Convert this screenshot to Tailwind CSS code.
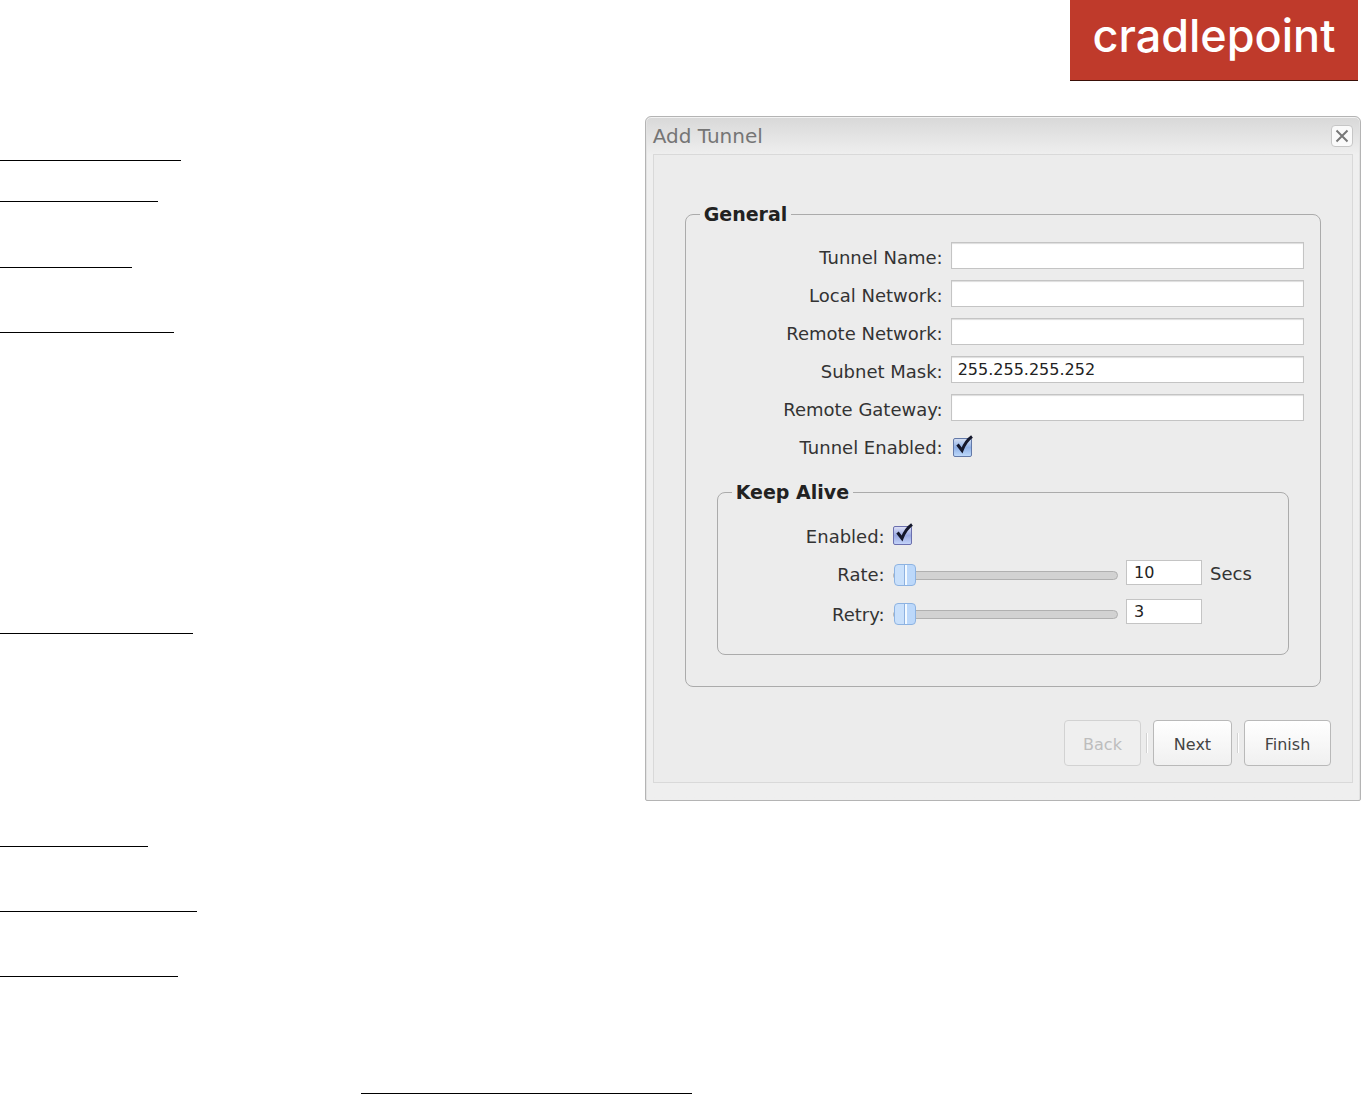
<!DOCTYPE html>
<html lang="en">
<head>
<meta charset="utf-8">
<meta name="viewport" content="width=device-width, initial-scale=1">
<title>Add Tunnel</title>
<script src="https://cdn.jsdelivr.net/npm/@tailwindcss/browser@4"></script>
</head>
<body class="bg-white font-['DejaVu_Sans',sans-serif] text-[#333]">
<header class="flex justify-end pr-1">
  <div class="flex h-[81px] w-72 items-start justify-center border-b border-[#3a0f08] bg-[#bf3a2b] pt-2 font-['Inter',sans-serif] text-[45px] leading-[56px] font-medium text-white">cradlepoint</div>
</header>

<main class="grid grid-cols-[9fr_10fr] items-start pt-[35px] pr-px">
  <!-- section rules -->
  <div class="pt-11">
    <hr class="w-[181px] border-black">
    <hr class="mt-10 w-[158px] border-black">
    <hr class="mt-[65px] w-[132px] border-black">
    <hr class="mt-16 w-[174px] border-black">
    <hr class="mt-[300px] w-[193px] border-black">
    <hr class="mt-[212px] w-[148px] border-black">
    <hr class="mt-16 w-[197px] border-black">
    <hr class="mt-16 w-[178px] border-black">
  </div>

  <form role="dialog" aria-labelledby="title" class="rounded-t-md rounded-b-xs border border-[#b4b4b4] bg-[#efefef] bg-linear-to-b from-[#d8d8d8] to-[#efefef] to-[38px] px-[7px] pb-[17px] shadow-[inset_0_1px_0_#f2f2f2,inset_1px_0_0_#e2e2e2,inset_-1px_0_0_#e2e2e2]">
    <div class="flex h-[37px] items-center justify-between">
      <h1 id="title" class="pt-px text-[20px] leading-6 text-[#757575]">Add Tunnel</h1>
      <button type="button" aria-label="Close" class="flex size-[22px] items-center justify-center rounded-sm border border-[#c6c6c6] bg-[#fafafa]">
        <svg viewBox="0 0 14 14" class="size-3.5" fill="none" stroke="#777" stroke-width="2"><path d="M1.500 1.500 12.500 12.500M12.500 1.500 1.500 12.500"/></svg>
      </button>
    </div>

    <div class="border border-[#d9d9d9] bg-[#ececec] pt-[45px] pb-4">
      <fieldset class="mx-[31px] min-w-0 rounded-lg border border-[#ababab] pt-2 pb-[31px]">
        <legend class="ml-3.5 px-1 text-[19px] leading-7 font-bold text-[#222]">General</legend>
        <div class="flex h-[38px] items-center gap-2 pr-4">
          <label for="name" class="w-[257px] shrink-0 pt-1.5 text-right text-[18px] leading-6">Tunnel Name:</label>
          <input id="name" type="text" class="h-[27px] min-w-0 flex-1 border border-[#c4c4c4] bg-white px-1.5 text-[16px] text-[#222] shadow-[inset_0_1px_1px_#ddd]">
        </div>
        <div class="flex h-[38px] items-center gap-2 pr-4">
          <label for="local" class="w-[257px] shrink-0 pt-1.5 text-right text-[18px] leading-6">Local Network:</label>
          <input id="local" type="text" class="h-[27px] min-w-0 flex-1 border border-[#c4c4c4] bg-white px-1.5 text-[16px] text-[#222] shadow-[inset_0_1px_1px_#ddd]">
        </div>
        <div class="flex h-[38px] items-center gap-2 pr-4">
          <label for="remote" class="w-[257px] shrink-0 pt-1.5 text-right text-[18px] leading-6">Remote Network:</label>
          <input id="remote" type="text" class="h-[27px] min-w-0 flex-1 border border-[#c4c4c4] bg-white px-1.5 text-[16px] text-[#222] shadow-[inset_0_1px_1px_#ddd]">
        </div>
        <div class="flex h-[38px] items-center gap-2 pr-4">
          <label for="mask" class="w-[257px] shrink-0 pt-1.5 text-right text-[18px] leading-6">Subnet Mask:</label>
          <input id="mask" type="text" value="255.255.255.252" class="h-[27px] min-w-0 flex-1 border border-[#c4c4c4] bg-white px-1.5 text-[16px] text-[#222] shadow-[inset_0_1px_1px_#ddd]">
        </div>
        <div class="flex h-[38px] items-center gap-2 pr-4">
          <label for="gateway" class="w-[257px] shrink-0 pt-1.5 text-right text-[18px] leading-6">Remote Gateway:</label>
          <input id="gateway" type="text" class="h-[27px] min-w-0 flex-1 border border-[#c4c4c4] bg-white px-1.5 text-[16px] text-[#222] shadow-[inset_0_1px_1px_#ddd]">
        </div>
        <div class="flex h-[38px] items-center gap-2 pr-4">
          <label for="enabled" class="w-[257px] shrink-0 pt-1.5 text-right text-[18px] leading-6">Tunnel Enabled:</label>
          <span class="relative mt-1 ml-0.5 size-[19px]">
            <input id="enabled" type="checkbox" checked class="peer block size-[19px] appearance-none rounded-xs border border-[#6379a8] bg-linear-to-b from-[#d3def2] via-[#8fb0e6] to-[#bcd8fa]">
            <svg viewBox="0 0 22 22" class="pointer-events-none absolute -top-[3px] left-0 hidden size-[22px] peer-checked:block" fill="none" stroke="#14172b" stroke-width="3"><path d="M4.500 9.500 9 15.500C11 10 14 5 19 1.500"/></svg>
          </span>
        </div>

        <fieldset class="mx-[31px] mt-3.5 min-w-0 rounded-lg border border-[#ababab] pt-2.5 pb-[21px]">
          <legend class="ml-3.5 px-1 text-[19px] leading-7 font-bold text-[#222]">Keep Alive</legend>
          <div class="flex h-[38px] items-center gap-2">
            <label for="alive" class="w-[167px] shrink-0 pt-1 text-right text-[18px] leading-6">Enabled:</label>
            <span class="relative size-[19px]">
              <input id="alive" type="checkbox" checked class="peer block size-[19px] appearance-none rounded-xs border border-[#6b6fae] bg-linear-to-b from-[#dcdff5] via-[#9aa9e2] to-[#c3d3f9]">
              <svg viewBox="0 0 22 22" class="pointer-events-none absolute -top-[3px] left-0 hidden size-[22px] peer-checked:block" fill="none" stroke="#14172b" stroke-width="3"><path d="M4.500 9.500 9 15.500C11 10 14 5 19 1.500"/></svg>
            </span>
          </div>
          <div class="flex h-[38px] items-center gap-2">
            <label for="rate" class="w-[167px] shrink-0 pt-1 text-right text-[18px] leading-6">Rate:</label>
            <input id="rate" type="range" min="10" max="360" value="10" class="mt-1 h-6 min-w-0 flex-1 appearance-none bg-transparent [&::-webkit-slider-runnable-track]:h-[9px] [&::-webkit-slider-runnable-track]:rounded-full [&::-webkit-slider-runnable-track]:border [&::-webkit-slider-runnable-track]:border-[#b0b0b0] [&::-webkit-slider-runnable-track]:bg-[#d2d2d2] [&::-webkit-slider-thumb]:-mt-2 [&::-webkit-slider-thumb]:h-[22px] [&::-webkit-slider-thumb]:w-[22px] [&::-webkit-slider-thumb]:appearance-none [&::-webkit-slider-thumb]:rounded-sm [&::-webkit-slider-thumb]:border [&::-webkit-slider-thumb]:border-[#8db3e2] [&::-webkit-slider-thumb]:bg-[linear-gradient(90deg,#c9e0fb_9px,#8fb2e0_9px,#8fb2e0_10px,#f4faff_10px,#f4faff_12px,#bcd8fa_12px)]">
            <input type="text" aria-label="Rate in seconds" value="10" class="mb-0.5 h-[25px] w-[76px] border border-[#c4c4c4] bg-white px-[7px] text-[16px] text-[#222]">
            <span class="w-[78px] pt-px text-[18px] leading-6">Secs</span>
          </div>
          <div class="flex h-[41px] items-center gap-2">
            <label for="retry" class="w-[167px] shrink-0 pt-1 text-right text-[18px] leading-6">Retry:</label>
            <input id="retry" type="range" min="3" max="100" value="3" class="mt-1 h-6 min-w-0 flex-1 appearance-none bg-transparent [&::-webkit-slider-runnable-track]:h-[9px] [&::-webkit-slider-runnable-track]:rounded-full [&::-webkit-slider-runnable-track]:border [&::-webkit-slider-runnable-track]:border-[#b0b0b0] [&::-webkit-slider-runnable-track]:bg-[#d2d2d2] [&::-webkit-slider-thumb]:-mt-2 [&::-webkit-slider-thumb]:h-[22px] [&::-webkit-slider-thumb]:w-[22px] [&::-webkit-slider-thumb]:appearance-none [&::-webkit-slider-thumb]:rounded-sm [&::-webkit-slider-thumb]:border [&::-webkit-slider-thumb]:border-[#8db3e2] [&::-webkit-slider-thumb]:bg-[linear-gradient(90deg,#c9e0fb_9px,#8fb2e0_9px,#8fb2e0_10px,#f4faff_10px,#f4faff_12px,#bcd8fa_12px)]">
            <input type="text" aria-label="Retry count" value="3" class="mb-0.5 h-[25px] w-[76px] border border-[#c4c4c4] bg-white px-[7px] text-[16px] text-[#222]">
            <span class="w-[78px]"></span>
          </div>
        </fieldset>
      </fieldset>

      <div class="mt-[33px] flex items-center justify-end gap-[5px] pr-[21px] text-[16px]">
        <button type="button" disabled class="h-[46px] w-[77px] rounded-sm border border-[#d2d2d2] bg-[#efefef] pt-1 text-[#bdbdbd]">Back</button>
        <span class="h-5 w-0.5 border-l border-[#d2d2d2] bg-white"></span>
        <button type="button" class="h-[46px] w-[79px] rounded-sm border border-[#b9b9b9] bg-linear-to-b from-white to-[#f0f0f0] pt-1 text-[#444]">Next</button>
        <span class="h-5 w-0.5 border-l border-[#d2d2d2] bg-white"></span>
        <button type="submit" class="h-[46px] w-[87px] rounded-sm border border-[#b9b9b9] bg-linear-to-b from-white to-[#f0f0f0] pt-1 text-[#444]">Finish</button>
      </div>
    </div>
  </form>
</main>

<footer class="pt-[116px] pl-[361px]">
  <hr class="w-[331px] border-black">
</footer>
</body>
</html>
